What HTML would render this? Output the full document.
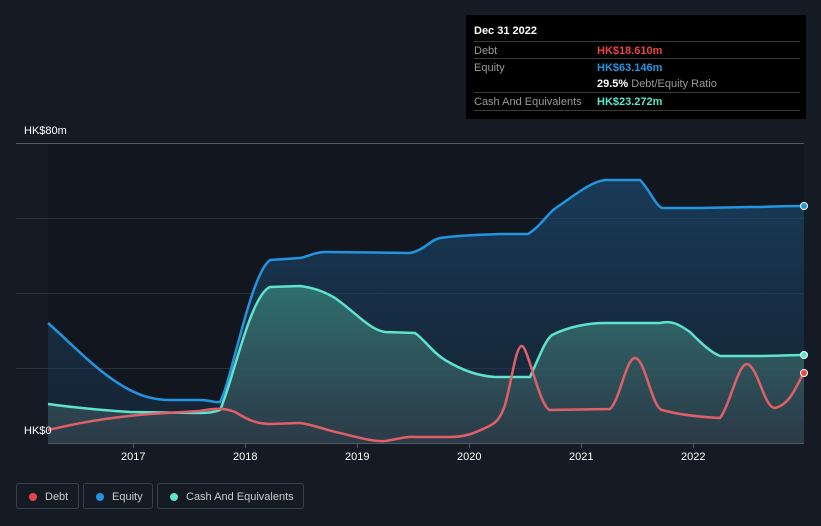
<!DOCTYPE html><html><head><style>
body{margin:0;width:821px;height:526px;background:#151b24;font-family:"Liberation Sans",sans-serif;overflow:hidden;position:relative}
.t{position:absolute;color:#fff;font-size:11px}
.tip{position:absolute;left:466px;top:15px;width:340px;height:104px;background:#000;}
.tip .r{position:absolute;left:8px;width:326px;border-top:1px solid #3a3a3a;height:17px;font-size:11px;color:#999}
.tip .v{position:absolute;left:123px;top:3px;font-weight:bold}
.leg{position:absolute;top:483px;height:26px;border:1px solid #3a404a;border-radius:3px;color:#ccc;font-size:11px;line-height:26px;box-sizing:border-box}
.leg i{position:absolute;left:12px;top:9px;width:8px;height:8px;border-radius:50%}
</style></head><body>
<svg width="821" height="526" style="position:absolute;left:0;top:0">
<defs>
<linearGradient id="ge" x1="0" y1="0" x2="0" y2="1"><stop offset="0" stop-color="#1a4a70" stop-opacity=".7"/><stop offset="1" stop-color="#1a3048" stop-opacity=".5"/></linearGradient>
<linearGradient id="gc" x1="0" y1="0" x2="0" y2="1"><stop offset="0" stop-color="#3a8a80" stop-opacity=".7"/><stop offset="1" stop-color="#3a4a55" stop-opacity=".6"/></linearGradient>
</defs>
<rect x="48" y="143" width="756" height="300" fill="#12161e"/>
<g stroke="#2c323c" stroke-width="1"><line x1="16" y1="218.5" x2="804" y2="218.5"/><line x1="16" y1="293.5" x2="804" y2="293.5"/><line x1="16" y1="368.5" x2="804" y2="368.5"/></g>
<line x1="16" y1="143.5" x2="804" y2="143.5" stroke="#555a62"/>
<path d="M48,323 C70,342 100,375 130,390 C145,398 160,400 170,400 L200,400 C210,400 215,403 220,402 C232,380 250,275 270,260 L300,258 C310,256 315,252 325,252 L410,253 C425,250 430,240 440,238 C460,235 480,235 500,234 L528,234 C538,228 545,218 553,210 C575,195 590,182 605,180 L640,180 C650,190 655,205 662,208 L700,208 L750,207 C770,207 780,206 804,206 L804,443 L48,443Z" fill="url(#ge)"/>
<path d="M48,404 C70,407 100,410 130,412 L200,413 C210,413 215,412 220,410 C232,385 250,295 270,287 L300,286 C315,288 325,292 335,298 C355,312 370,330 385,332 L415,333 C425,340 432,352 445,360 C465,372 480,376 495,377 L530,377 C538,360 545,340 552,335 C570,326 590,323 605,323 L660,323 C672,320 680,325 690,332 C700,342 710,352 720,356 L760,356 C780,356 790,355 804,355 L804,443 L48,443Z" fill="url(#gc)"/>
<path d="M48,323 C70,342 100,375 130,390 C145,398 160,400 170,400 L200,400 C210,400 215,403 220,402 C232,380 250,275 270,260 L300,258 C310,256 315,252 325,252 L410,253 C425,250 430,240 440,238 C460,235 480,235 500,234 L528,234 C538,228 545,218 553,210 C575,195 590,182 605,180 L640,180 C650,190 655,205 662,208 L700,208 L750,207 C770,207 780,206 804,206" fill="none" stroke="#2394e0" stroke-width="2.5"/>
<path d="M48,404 C70,407 100,410 130,412 L200,413 C210,413 215,412 220,410 C232,385 250,295 270,287 L300,286 C315,288 325,292 335,298 C355,312 370,330 385,332 L415,333 C425,340 432,352 445,360 C465,372 480,376 495,377 L530,377 C538,360 545,340 552,335 C570,326 590,323 605,323 L660,323 C672,320 680,325 690,332 C700,342 710,352 720,356 L760,356 C780,356 790,355 804,355" fill="none" stroke="#5ee3cc" stroke-width="2.5"/>
<path d="M48,430 C70,425 100,418 150,414 L200,411 C215,408 225,408 235,412 C245,418 255,424 270,424 L300,423 C315,425 325,430 340,433 C360,438 375,442 385,441 C395,440 405,436 415,437 L450,437 C465,437 475,433 485,428 C495,424 500,420 505,405 C512,380 516,345 522,346 C528,347 540,408 550,410 L610,409 C620,400 626,358 635,358 C645,358 652,408 662,410 C680,415 700,417 720,418 C730,405 738,364 747,364 C758,366 764,408 775,408 C790,405 797,385 804,372" fill="none" stroke="#e0606a" stroke-width="2.5"/>
<line x1="48" y1="443.5" x2="804" y2="443.5" stroke="#555a62"/>
<g stroke="#555a62"><line x1="133.5" y1="443" x2="133.5" y2="448"/><line x1="245.5" y1="443" x2="245.5" y2="448"/><line x1="357.5" y1="443" x2="357.5" y2="448"/><line x1="469.5" y1="443" x2="469.5" y2="448"/><line x1="581.5" y1="443" x2="581.5" y2="448"/><line x1="693.5" y1="443" x2="693.5" y2="448"/></g>
<circle cx="804" cy="206" r="3.5" fill="#2394e0" stroke="#fff" stroke-width="1"/>
<circle cx="804" cy="355" r="3.5" fill="#5ee3cc" stroke="#fff" stroke-width="1"/>
<circle cx="804" cy="373" r="3.5" fill="#e84545" stroke="#fff" stroke-width="1"/>
</svg>
<div class="t" style="left:24px;top:125px">HK$80m</div>
<div class="t" style="left:24px;top:425px">HK$0</div>
<div class="t" style="left:121px;top:451px">2017</div>
<div class="t" style="left:233px;top:451px">2018</div>
<div class="t" style="left:345px;top:451px">2019</div>
<div class="t" style="left:457px;top:451px">2020</div>
<div class="t" style="left:569px;top:451px">2021</div>
<div class="t" style="left:681px;top:451px">2022</div>
<div class="tip">
<div style="position:absolute;left:8px;top:10px;color:#fff;font-size:11px;font-weight:bold">Dec 31 2022</div>
<div class="r" style="top:26px"><span style="position:absolute;top:3px">Debt</span><span class="v" style="color:#e84545">HK$18.610m</span></div>
<div class="r" style="top:43px"><span style="position:absolute;top:3px">Equity</span><span class="v" style="color:#2394e0">HK$63.146m</span></div>
<div class="r" style="top:60px;border-top:none"><span class="v" style="color:#fff">29.5% <span style="color:#999;font-weight:normal">Debt/Equity Ratio</span></span></div>
<div class="r" style="top:77px"><span style="position:absolute;top:3px">Cash And Equivalents</span><span class="v" style="color:#5ee3cc">HK$23.272m</span></div>
<div class="r" style="top:95px;height:0"></div>
</div>
<div class="leg" style="left:16px;width:63px"><i style="background:#e84545"></i><span style="position:absolute;left:28px">Debt</span></div>
<div class="leg" style="left:83px;width:70px"><i style="background:#2394e0"></i><span style="position:absolute;left:28px">Equity</span></div>
<div class="leg" style="left:157px;width:147px"><i style="background:#5ee3cc"></i><span style="position:absolute;left:28px">Cash And Equivalents</span></div>
</body></html>
